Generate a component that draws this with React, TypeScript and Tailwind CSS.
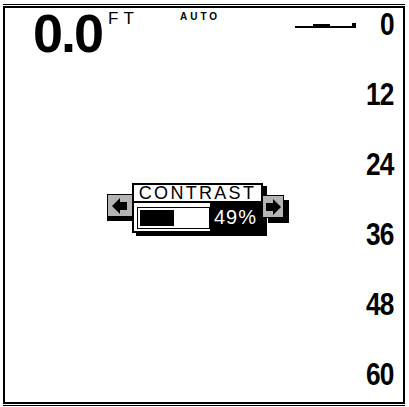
import React from "react";

const sans = { fontFamily: '"Liberation Sans", Arial, sans-serif' };

function LeftArrow() {
  return (
    <svg width="16" height="16" viewBox="0 0 16 16">
      <polygon points="0,8 8,0 8,4 15,4 15,12 8,12 8,16" fill="#000" />
    </svg>
  );
}

function RightArrow() {
  return (
    <svg width="16" height="16" viewBox="0 0 16 16">
      <polygon points="16,8 8,0 8,4 1,4 1,12 8,12 8,16" fill="#000" />
    </svg>
  );
}

export default function App() {
  const scale = ["0", "12", "24", "36", "48", "60"];
  return (
    <div className="w-[409px] h-[407px] bg-white pt-[4px] pl-[3px] pr-[4px] pb-[1px] flex" style={sans}>
      <div className="flex-1 flex flex-col border-y border-black py-[1px]">
        <div className="flex-1 flex border-2 border-black">
          {/* left area */}
          <div className="flex-1 flex flex-col">
            <div className="h-[50px] flex items-start pl-[28px] pt-[3px]">
              <div className="w-[147px] flex items-start">
                <span className="text-[54px] leading-[44px] font-bold tracking-[-2px] text-black">0.0</span>
                <span className="ml-[6px] text-[17px] leading-[16px] tracking-[5px] text-black">FT</span>
              </div>
              <span className="w-[115px] mt-[1px] text-[10px] leading-[9px] font-bold tracking-[3px] text-black">AUTO</span>
              <svg className="mt-[11px]" width="63" height="8" viewBox="0 0 63 8">
                <rect x="0" y="4" width="60" height="2" fill="#000" />
                <rect x="18" y="2" width="17" height="4" fill="#000" />
                <rect x="57" y="1" width="4" height="5" fill="#000" />
              </svg>
            </div>
            <div className="mt-[125px] ml-[102px] flex items-start">
              <div className="mt-[11px] w-[25px] h-[23px] bg-[#b4b4b4] border border-black border-r-0 flex items-center justify-center shadow-[0_4px_0_#000]">
                <LeftArrow />
              </div>
              <div className="w-[131px] h-[50px] border-2 border-black bg-white flex flex-col shadow-[4px_3px_0_#000]">
                <div className="h-[18px] flex items-center justify-center border-b-2 border-black">
                  <span className="text-[18px] leading-[18px] tracking-[2.3px] text-black">CONTRAST</span>
                </div>
                <div className="flex-1 flex bg-black">
                  <div className="bg-white pl-[3px] pt-[4px]">
                    <div className="w-[73px] h-[22px] border border-black bg-white p-[2px]">
                      <div className="w-[34px] h-full bg-black" />
                    </div>
                  </div>
                  <div className="flex-1 flex items-center justify-center">
                    <span className="text-[20px] leading-[20px] tracking-[1px] text-white">49%</span>
                  </div>
                </div>
              </div>
              <div className="mt-[12px] w-[21px] h-[23px] bg-[#b4b4b4] border border-black border-l-0 flex items-center justify-center shadow-[5px_5px_0_#000]">
                <RightArrow />
              </div>
            </div>
          </div>
          {/* right scale */}
          <div className="w-[44px] pr-[9px] flex flex-col items-end gap-[38px]">
            {scale.map((s) => (
              <span
                key={s}
                className="block text-[32px] leading-[32px] font-bold tracking-[-1px] text-black scale-x-[0.82] origin-right"
              >
                {s}
              </span>
            ))}
          </div>
        </div>
      </div>
    </div>
  );
}
